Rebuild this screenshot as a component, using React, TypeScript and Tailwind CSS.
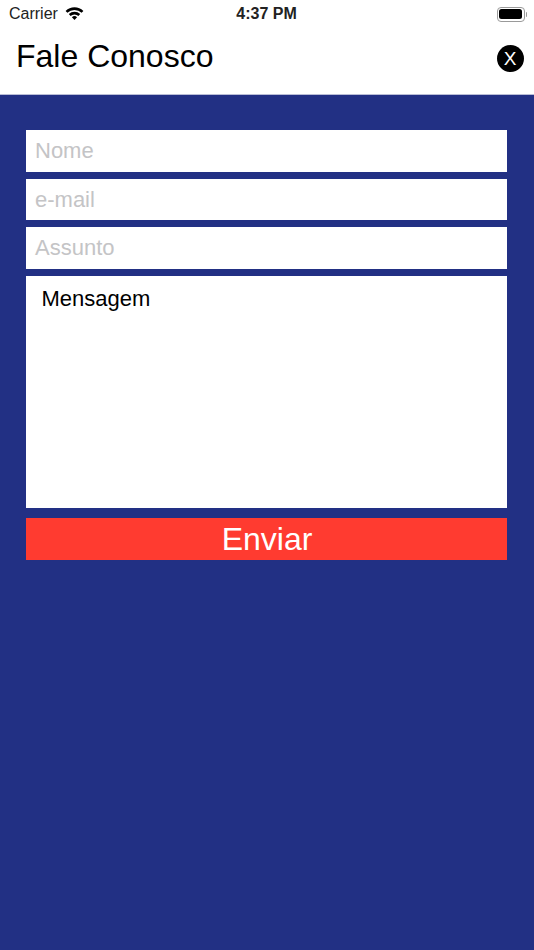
import React from "react";

const font = "font-['Liberation_Sans',Arial,sans-serif]";

function Field({ label }: { label: string }) {
  return (
    <div className="flex h-[41.5px] items-center bg-white pl-[9px] text-[22px] text-[#c4c4c6]">
      {label}
    </div>
  );
}

export default function App() {
  return (
    <div className={`${font} flex h-[950px] w-[534px] flex-col bg-[#223084]`}>
      <header className="h-[95px] shrink-0 border-b border-[#b9bdd6] bg-white">
        <div className="flex h-[27px] items-center justify-between pl-[9px] pr-[7px] pt-[1px] text-black">
          <div className="flex w-[120px] items-center gap-[7px]">
            <span className="text-[16px] text-[#222]">Carrier</span>
            <svg width="19" height="14" viewBox="0 0 19 14" className="mt-[-3px]">
              <path d="M0.6 4.9 A12.8 12.8 0 0 1 18.4 4.9 L16.6 6.8 A10.2 10.2 0 0 0 2.4 6.8 Z" fill="#000" />
              <path d="M3.8 8.1 A8.3 8.3 0 0 1 15.2 8.1 L13.4 10 A5.7 5.7 0 0 0 5.6 10 Z" fill="#000" />
              <path d="M6.9 11.2 A3.9 3.9 0 0 1 12.1 11.2 L9.5 13.9 Z" fill="#000" />
            </svg>
          </div>
          <span className="ml-[-3px] text-[16px] font-bold text-[#222]">4:37 PM</span>
          <div className="flex w-[120px] items-center justify-end">
            <div className="flex h-[15px] w-[28px] items-center justify-center rounded-[4px] border border-[#9a9a9a] p-[1.5px]">
              <div className="h-full w-full rounded-[2.5px] bg-black" />
            </div>
            <div className="ml-[1px] h-[5px] w-[1.5px] rounded-r-sm bg-[#9a9a9a]" />
          </div>
        </div>
        <div className="flex items-start justify-between pl-[16px] pr-[10.5px]">
          <h1 className="mt-[9px] text-[32px] leading-[40px] text-black">Fale Conosco</h1>
          <button className="mt-[18px] flex h-[27px] w-[27px] items-center justify-center rounded-full bg-black text-[19px] leading-none text-white">
            X
          </button>
        </div>
      </header>
      <main className="flex flex-col gap-[7px] pl-[26px] pr-[27px] pt-[35px]">
        <Field label="Nome" />
        <Field label="e-mail" />
        <Field label="Assunto" />
        <div className="h-[232.5px] bg-white pl-[15.5px] pt-[9px] text-[22px] leading-[28px] text-black">
          Mensagem
        </div>
        <button className="mt-[3px] h-[41.5px] bg-[#ff3b30] pl-[1px] text-center text-[32px] leading-[43px] text-white">
          Enviar
        </button>
      </main>
    </div>
  );
}
